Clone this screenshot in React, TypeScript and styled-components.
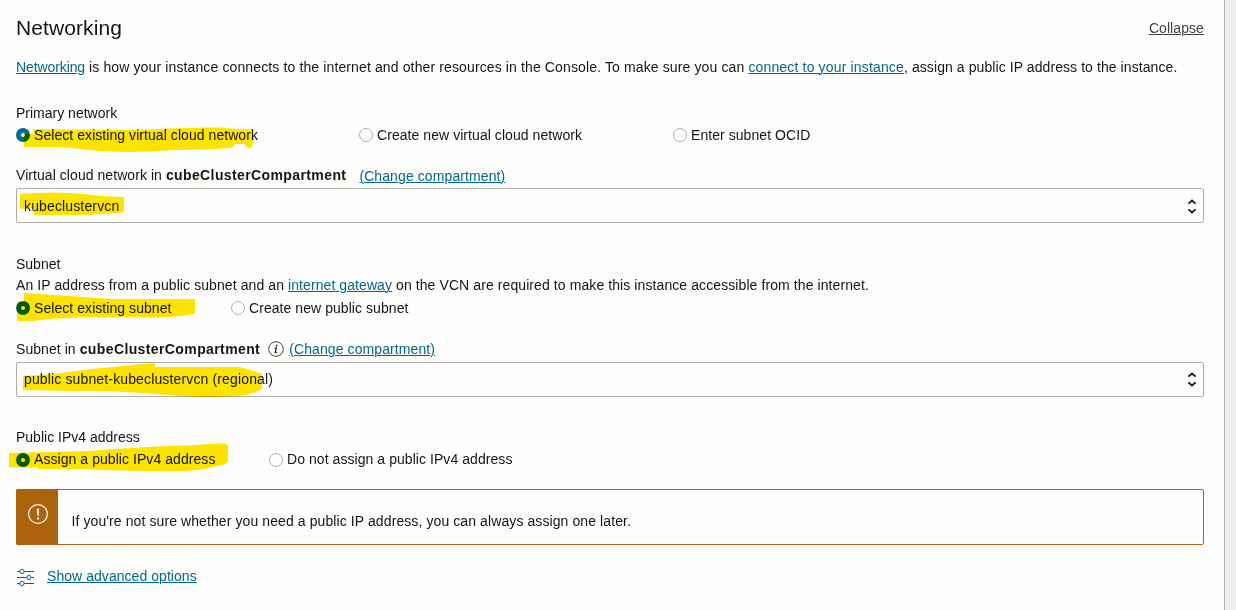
import React from 'react';
import styled, { createGlobalStyle } from 'styled-components';

const GlobalStyle = createGlobalStyle`
  * { box-sizing: border-box; }
  body {
    margin: 0;
    background: #f1efed;
    color: #161513;
    font: 14px/20px "Liberation Sans", Arial, sans-serif;
    overflow: hidden;
  }
`;

const Panel = styled.main`
  position: relative;
  width: 1225px;
  height: 610px;
  padding: 14px 20px 0 16px;
  background: #fdfdfb;
  border-right: 1px solid #b6b2ae;
`;

const Header = styled.header`
  display: flex;
  justify-content: space-between;
  align-items: center;
  height: 28px;
`;

const Title = styled.h2`
  margin: 0;
  font-size: 21px;
  line-height: 28px;
  font-weight: 400;
  letter-spacing: 0.1px;
`;

const Text = styled.span<{ $spacing: number }>`
  letter-spacing: ${(p) => p.$spacing}px;
`;

const Strong = styled.b`
  letter-spacing: 0.39px;
`;

const Link = styled.a<{ $muted?: boolean; $spacing?: number }>`
  color: ${(p) => (p.$muted ? '#45423f' : '#00688c')};
  letter-spacing: ${(p) => p.$spacing ?? 0.08}px;
  text-decoration: underline;
  text-decoration-thickness: 1px;
  text-underline-offset: 1px;
`;

const Line = styled.p<{ $top: number }>`
  margin: ${(p) => p.$top}px 0 0;
  height: 20px;
  white-space: nowrap;
`;

const RadioRow = styled.div<{ $top: number; $columns: string }>`
  display: grid;
  grid-template-columns: ${(p) => p.$columns};
  margin-top: ${(p) => p.$top}px;
  height: 20px;
  white-space: nowrap;
  letter-spacing: 0.06px;
`;

const RadioLabel = styled.label`
  display: flex;
  align-items: center;
  gap: 4px;
`;

const Dot = styled.span<{ $on?: boolean; $drop: number }>`
  width: 14px;
  height: 14px;
  flex: none;
  margin-top: ${(p) => p.$drop * 2}px;
  border-radius: 50%;
  border: ${(p) => (p.$on ? '5px solid #00688c' : '1px solid #b5b1ae')};
  background: #fdfdfb;
`;

const FieldLabel = styled.div<{ $top: number }>`
  display: flex;
  align-items: center;
  height: 20px;
  margin-top: ${(p) => p.$top}px;
  white-space: pre;
`;

const LabelLink = styled(Link)<{ $gap: number; $drop?: number }>`
  margin-left: ${(p) => p.$gap}px;
  padding-top: ${(p) => p.$drop ?? 0}px;
`;

const SelectBox = styled.div<{ $lift: number }>`
  display: flex;
  justify-content: space-between;
  align-items: center;
  height: 35px;
  margin-top: 3px;
  padding: 0 6px ${(p) => p.$lift * 2}px 7px;
  border: 1px solid #b3aeaa;
  border-radius: 2px;
  letter-spacing: 0.14px;
`;

const InfoSvg = styled.svg`
  margin-left: 8px;
  flex: none;
`;

const Alert = styled.div`
  display: flex;
  height: 56px;
  margin-top: 20px;
  border: 1px solid #ac630c;
  border-radius: 2px;
`;

const AlertIcon = styled.div`
  display: flex;
  justify-content: center;
  width: 42px;
  margin: -1px 0 -1px -1px;
  padding: 14px 0 0 2px;
  border-radius: 2px 0 0 2px;
  background: #ac630c;
`;

const AlertText = styled.div`
  padding: 21px 0 0 13.5px;
  letter-spacing: 0.095px;
`;

const Advanced = styled.div`
  display: flex;
  align-items: center;
  gap: 12px;
  height: 20px;
  margin-top: 21px;
`;

const SlidersSvg = styled.svg`
  margin-top: 2px;
`;

const Marker = styled.svg`
  position: absolute;
  left: 0;
  top: 0;
  pointer-events: none;
  mix-blend-mode: multiply;
`;

type Option = { label: string; on?: boolean };
type RadiosProps = { top: number; columns: string; options: Option[]; drop?: number };

function Radios({ top, columns, options, drop = 0 }: RadiosProps) {
  return (
    <RadioRow $top={top} $columns={columns}>
      {options.map((o) => (
        <RadioLabel key={o.label}>
          <Dot $on={o.on} $drop={drop} />
          {o.label}
        </RadioLabel>
      ))}
    </RadioRow>
  );
}

function Select({ value, lift = 0 }: { value: string; lift?: number }) {
  return (
    <SelectBox $lift={lift}>
      <span>{value}</span>
      <svg width="10" height="16" viewBox="0 0 10 16" fill="none" stroke="#161513" strokeWidth="1.7">
        <path d="M1.4 5.700 5 2.500l3.600 3.200M1.400 11.300 5 14.500l3.600-3.200" />
      </svg>
    </SelectBox>
  );
}

export default function App() {
  return (
    <>
      <GlobalStyle />
      <Panel>
        <Header>
          <Title>Networking</Title>
          <Link $muted>Collapse</Link>
        </Header>
        <Line $top={15}>
          <Link $spacing={-0.1}>Networking</Link>
          <Text $spacing={0.125}>
            {' is how your instance connects to the internet and other resources in the Console. To make sure you can '}
          </Text>
          <Link $spacing={0.16}>connect to your instance</Link>
          <Text $spacing={0.08}>, assign a public IP address to the instance.</Text>
        </Line>

        <Line $top={26}>Primary network</Line>
        <Radios
          top={2}
          columns="343px 314px auto"
          options={[
            { label: 'Select existing virtual cloud network', on: true },
            { label: 'Create new virtual cloud network' },
            { label: 'Enter subnet OCID' },
          ]}
        />
        <FieldLabel $top={20}>
          <Text $spacing={0.06}>Virtual cloud network in <Strong>cubeClusterCompartment</Strong></Text>
          <LabelLink $gap={13} $drop={2} $spacing={0.1}>(Change compartment)</LabelLink>
        </FieldLabel>
        <Select value="kubeclustervcn" />

        <Line $top={31}>Subnet</Line>
        <Line $top={1}>
          <Text $spacing={0.09}>An IP address from a public subnet and an </Text>
          <Link $spacing={0.08}>internet gateway</Link>
          <Text $spacing={0.09}>
            {' on the VCN are required to make this instance accessible from the internet.'}
          </Text>
        </Line>
        <Radios
          top={3}
          columns="215px auto"
          options={[{ label: 'Select existing subnet', on: true }, { label: 'Create new public subnet' }]}
        />
        <FieldLabel $top={21}>
          <Text $spacing={0.06}>Subnet in <Strong>cubeClusterCompartment</Strong></Text>
          <InfoSvg width="16" height="16" viewBox="0 0 16 16">
            <circle cx="8" cy="8" r="7.300" fill="none" stroke="#45423f" />
            <circle cx="8.700" cy="4.700" r="0.900" fill="#161513" />
            <path d="M6.600 7.100h1.700L7.300 11.500h1.600" fill="none" stroke="#161513" strokeWidth="1.200" />
          </InfoSvg>
          <LabelLink $gap={5} $spacing={0.1}>(Change compartment)</LabelLink>
        </FieldLabel>
        <Select value="public subnet-kubeclustervcn (regional)" lift={1} />

        <Line $top={30}>Public IPv4 address</Line>
        <Radios
          top={2}
          drop={1}
          columns="253px auto"
          options={[
            { label: 'Assign a public IPv4 address', on: true },
            { label: 'Do not assign a public IPv4 address' },
          ]}
        />
        <Alert>
          <AlertIcon>
            <svg width="22" height="22" viewBox="0 0 22 22" fill="none" stroke="#fdfdfb">
              <circle cx="11" cy="11" r="9.400" strokeWidth="1.200" />
              <path d="M11 5.500v7M11 14.500v2" strokeWidth="2" />
            </svg>
          </AlertIcon>
          <AlertText>
            If you're not sure whether you need a public IP address, you can always assign one later.
          </AlertText>
        </Alert>
        <Advanced>
          <SlidersSvg width="19" height="20" viewBox="0 0 19 20" fill="none" stroke="#00688c">
            <path d="M1 4.500h3M8 4.500h10M1 10.500h9.500M15.500 10.500h2.500M1 16.500h3M8 16.500h10" />
            <circle cx="6" cy="4.500" r="2.100" />
            <circle cx="13" cy="10.500" r="2.100" />
            <circle cx="6" cy="16.500" r="2.100" />
          </SlidersSvg>
          <Link $spacing={0.05}>Show advanced options</Link>
        </Advanced>

        <Marker width="1224" height="610" viewBox="0 0 1224 610" fill="#ffe600">
          <path d="M33 129Q90 130 140 130Q190 127 220 127.500Q240 130 252 129V136L254 139L252 147Q249 149 246 147L245 144H235L233 147Q220 150 175 150Q120 154 85 149.500Q70 147 55 147H24V134H34Z" />
          <path d="M20 194Q55 191 84 194Q105 197 124 197V212Q105 215 65 215H34V208L20 209Z" />
          <path d="M24 293Q70 296 110 299L195 299V314Q175 317 158 317.500Q90 316 48 319Q30 322 17 321V302H24Z" />
          <path d="M23 376Q50 375 80 370.500Q120 366 155 363V367H240Q252 370 262 374V389Q252 395 238 396Q210 398 180 396Q110 390 75 391L23 390Z" />
          <path d="M9 453Q55 452 90 451Q150 446 190 445.500Q215 443 224 443.500Q228 444 228 448V461Q225 466 216 466Q205 470 185 471Q110 471 85 469H38V467Q20 468 9 467Z" />
        </Marker>
      </Panel>
    </>
  );
}
